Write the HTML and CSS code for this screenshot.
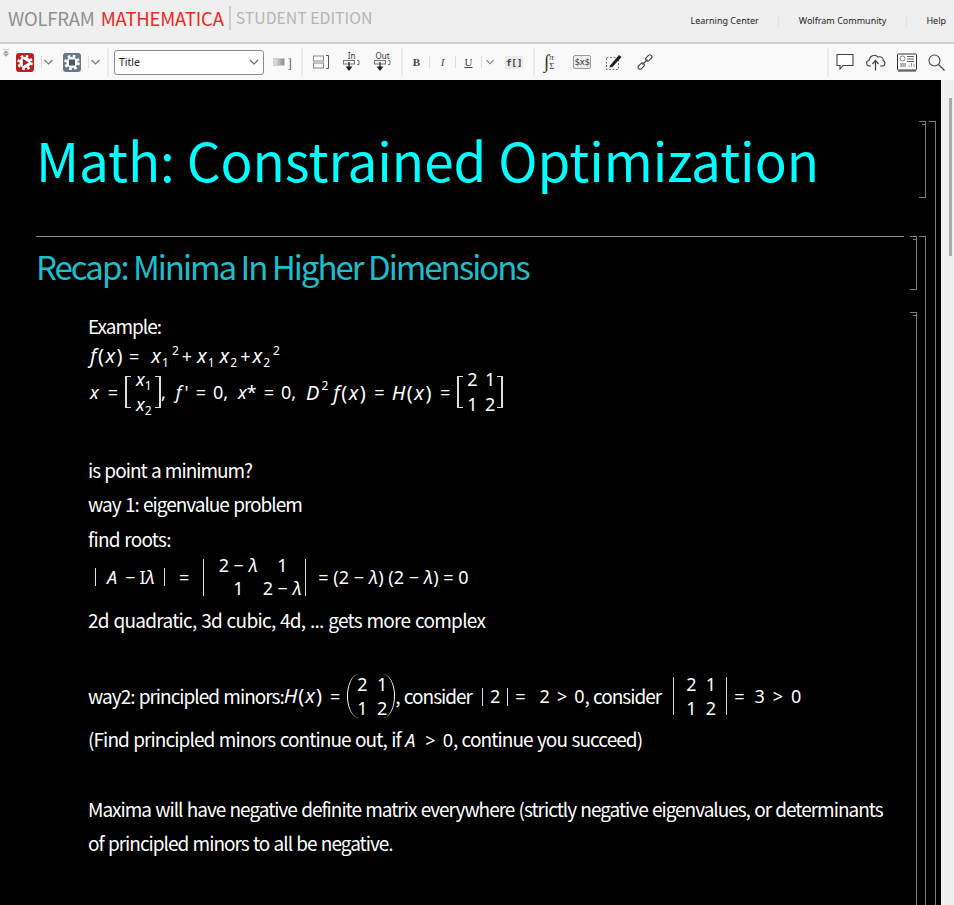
FILE: index.html
```html
<!DOCTYPE html>
<html lang="en">
<head>
<meta charset="utf-8">
<title>Wolfram Mathematica Student Edition</title>
<link rel="stylesheet" href="styles.css">
</head>
<body>
<header class="titlebar">
  <div class="logo"><span class="wolfram">WOLFRAM</span><span class="mathematica">MATHEMATICA</span><span class="edition">STUDENT EDITION</span></div>
  <nav class="links"><a>Learning Center</a><a>Wolfram Community</a><a>Help</a></nav>
</header>
<div class="toolbar">
  <svg class="collapse" width="8" height="8" viewBox="0 0 8 8"><path d="M1 .5h6M4 1.500 1.500 4h5zM4 7.500 1.500 5h5z" fill="#999" stroke="#aaa" stroke-width=".5"/></svg>
  <div class="tgroup first">
    <svg class="ic" width="18" height="19" viewBox="0 0 18 19"><rect width="18" height="19" rx="3" fill="#b5221d"/><circle cx="9" cy="9.500" r="6.300" fill="none" stroke="#fff" stroke-width="3" stroke-dasharray="2.500 2.450"/><circle cx="9" cy="9.500" r="5.600" fill="#fff"/><path d="M6.800 5.800l6 3.700-6 3.700z" fill="#b5221d"/></svg>
    <span class="vsep"></span><svg class="chev" width="9" height="6" viewBox="0 0 9 6"><path d="M.5 1l4 4 4-4" fill="none" stroke="#777" stroke-width="1.200"/></svg>
    <svg class="ic second" width="18" height="19" viewBox="0 0 18 19"><rect width="18" height="19" rx="3" fill="#66778c"/><circle cx="9" cy="9.500" r="6.300" fill="none" stroke="#fff" stroke-width="3" stroke-dasharray="2.500 2.450"/><circle cx="9" cy="9.500" r="5.600" fill="#fff"/><rect x="6" y="6.500" width="6" height="6" fill="#4c5a6b"/></svg>
    <span class="vsep"></span><svg class="chev" width="9" height="6" viewBox="0 0 9 6"><path d="M.5 1l4 4 4-4" fill="none" stroke="#777" stroke-width="1.200"/></svg>
  </div>
  <div class="tgroup style">
    <div class="select"><span>Title</span><svg width="10" height="6" viewBox="0 0 10 6"><path d="M1 1l4 4 4-4" fill="none" stroke="#666" stroke-width="1.200"/></svg></div>
    <span class="swatch"></span><span class="mini-b">]</span>
  </div>
  <div class="tgroup cells">
    <svg width="16" height="14" viewBox="0 0 16 14"><rect x=".5" y="1" width="10" height="5" fill="none" stroke="#888"/><rect x=".5" y="8" width="10" height="5" fill="none" stroke="#888"/><path d="M13 .500h2.500v13H13" fill="none" stroke="#555"/></svg>
    <span class="inout"><span class="iotext">In</span><svg width="17" height="12" viewBox="0 0 17 12"><rect x=".5" y=".5" width="11" height="3.500" fill="#f2f2f2" stroke="#777"/><path d="M14 .500h2v4h-2" fill="none" stroke="#777"/><path d="M6 2v6" stroke="#222" stroke-width="1.300"/><path d="M2.500 6.500h7L6 11z" fill="#222"/></svg></span>
    <span class="inout"><span class="iotext">Out</span><svg width="17" height="12" viewBox="0 0 17 12"><rect x=".5" y=".5" width="11" height="3.500" fill="#f2f2f2" stroke="#777"/><path d="M14 .500h2v4h-2" fill="none" stroke="#777"/><path d="M6 2v6" stroke="#222" stroke-width="1.300"/><path d="M2.500 6.500h7L6 11z" fill="#222"/></svg></span>
  </div>
  <div class="tgroup format">
    <b class="fb">B</b><span class="vsep light"></span><i class="fb">I</i><span class="vsep light"></span><u class="fb">U</u><span class="vsep light last"></span>
    <svg class="chev" width="8" height="6" viewBox="0 0 9 6"><path d="M.5 1l4 4 4-4" fill="none" stroke="#777" stroke-width="1.200"/></svg>
    <span class="fbox">f[]</span>
  </div>
  <div class="tgroup insert">
    <span class="intg"><span class="int">∫</span><span class="intr"><i>π</i><span>Σ</span></span></span>
    <span class="dollar">$x$</span>
    <svg width="16" height="16" viewBox="0 0 16 16"><rect x=".5" y="3.500" width="12" height="12" fill="none" stroke="#777" stroke-dasharray="2 1.500"/><path d="M4 11.500L13 1l2.500 2L6.500 13 3.500 13.500z" fill="#222"/></svg>
    <svg width="16" height="16" viewBox="0 0 16 16"><g fill="none" stroke="#444" stroke-width="1.100"><rect x="8.300" y="1.200" width="7" height="4" rx="2" transform="rotate(-45 11.800 3.200) translate(-.5 .5)"/><rect x=".7" y="10.800" width="7" height="4" rx="2" transform="rotate(-45 4.200 12.800) translate(.5 -.5)"/><path d="M5.500 10.500l5-5"/></g></svg>
  </div>
  <div class="tgroup right">
    <svg width="18" height="18" viewBox="0 0 18 18"><path d="M1 1.500h16v11H7l-3 3.500v-3.500H1z" fill="#fff" stroke="#444" stroke-width="1.100"/></svg>
    <svg width="21" height="18" viewBox="0 0 21 18"><path d="M6 13H4.500C1 13 .500 8 4 7.500 4.500 3 10 .500 13 4c3.500-1 6 1.500 5 3.500 3 1 2.500 5.500-1 5.500h-2" fill="none" stroke="#444" stroke-width="1.100"/><path d="M10.500 17.500V8M7.500 11l3-3.500 3 3.500" fill="none" stroke="#444" stroke-width="1.200"/></svg>
    <svg width="20" height="19" viewBox="0 0 20 19"><rect x=".5" y="1" width="19" height="16" rx="1" fill="#fff" stroke="#333"/><path d="M1 18h18" stroke="#333"/><circle cx="5.500" cy="5.500" r="2.500" fill="none" stroke="#888"/><path d="M10 3.500h7M10 6h7M10 8.500h7M3 11h6M3 13h6" stroke="#666"/><path d="M12 14v-2M14.500 14v-4M17 14v-3" stroke="#999"/></svg>
    <svg width="17" height="17" viewBox="0 0 17 17"><circle cx="6.500" cy="6.500" r="5.500" fill="none" stroke="#444" stroke-width="1.100"/><path d="M10.500 10.500l6 6" stroke="#444" stroke-width="1.300"/></svg>
  </div>
</div>
<div class="workspace">
  <main class="notebook">
    <h1 class="title">Math: Constrained Optimization</h1>
    <div class="rule"></div>
    <h2 class="section">Recap: Minima In Higher Dimensions</h2>
    <div class="body">
      <p class="l example">Example:</p>
      <p class="m fx"><span class="s2"></span><span class="fn"><i>f</i>(<i>x</i>)</span><span class="s5"></span>=<span class="s12"></span><i class="big">x</i><sub>1</sub><sup>2</sup><span class="s3"></span>+<span class="s5"></span><i class="big">x</i><sub>1</sub><span class="s5"></span><i class="big">x</i><sub>2</sub><span class="s3"></span>+<span class="s2"></span><i class="big">x</i><sub>2</sub><sup>2</sup></p>
      <div class="m eq1">
        <span class="s2"></span><i>x</i><span class="s9"></span>=<span class="s7"></span><span class="mat br col"><span><i>x</i><sub>1</sub></span><span><i>x</i><sub>2</sub></span></span>,<span class="s10"></span><i>f</i><span class="s3"></span>'<span class="s7"></span>=<span class="s7"></span>0,<span class="s10"></span><i>x</i>*<span class="s7"></span>=<span class="s7"></span>0,<span class="s10"></span><i class="big">D</i><sup class="low">2</sup><span class="s5"></span><span class="fn"><i>f</i>(<i>x</i>)</span><span class="s7"></span>=<span class="s7"></span><span class="fn"><i>H</i>(<i>x</i>)</span><span class="s7"></span>=<span class="s7"></span><span class="mat br two"><span><b>2</b><b>1</b></span><span><b>1</b><b>2</b></span></span>
      </div>
      <p class="l q1">is point a minimum?</p>
      <p class="l">way 1: eigenvalue problem</p>
      <p class="l roots">find roots:</p>
      <div class="m eq2">
        <span class="s7"></span><span class="bar"></span><span class="s11"></span><i>A</i><span class="s8"></span>−<span class="s4"></span>I<i>λ</i><span class="s9"></span><span class="bar"></span><span class="s14"></span>=<span class="s14"></span><span class="mat det wide"><b>2 − <i>λ</i></b><b>1</b><b>1</b><b>2 − <i>λ</i></b></span><span class="s12"></span><span class="loose">= (2 − <i>λ</i>) (2 − <i>λ</i>) = 0</span>
      </div>
      <p class="l after-eq">2d quadratic, 3d cubic, 4d, ... gets more complex</p>
      <div class="l w2">way2: principled minors:<span class="mt fn"><i>H</i>(<i>x</i>)</span><span class="mt"><span class="s7"></span>=<span class="s7"></span></span><span class="mat par two mt"><span><b>2</b><b>1</b></span><span><b>1</b><b>2</b></span></span>, consider<span class="s10"></span><span class="mt"><span class="bar short"></span><span class="s7"></span>2<span class="s7"></span><span class="bar short"></span><span class="s7"></span>=<span class="s14"></span>2<span class="s7"></span>&gt;<span class="s7"></span>0</span>, consider<span class="s12"></span><span class="mat det two mt"><span><b>2</b><b>1</b></span><span><b>1</b><b>2</b></span></span><span class="mt"><span class="s7"></span>=<span class="s10"></span>3<span class="s8"></span>&gt;<span class="s8"></span>0</span></div>
      <p class="l find">(Find principled minors continue out, if <i class="mt">A</i><span class="s10"></span><span class="mt">&gt;<span class="s7"></span>0</span>, continue you succeed)</p>
      <p class="l max">Maxima will have negative definite matrix everywhere (strictly negative eigenvalues, or determinants</p>
      <p class="l">of principled minors to all be negative.</p>
    </div>
    <span class="brk b-title"></span><span class="brk b-group1"></span><span class="brk b-sec"></span><span class="brk b-group2"></span><span class="brk b-text"></span>
  </main>
  <div class="scrollbar"><span class="thumb"></span></div>
</div>
</body>
</html>
```
FILE: styles.css
```css
* { box-sizing: border-box; }
html, body { margin: 0; height: 905px; overflow: hidden; }
body { width: 954px; background: #000; font-family: "Noto Sans CJK KR", "Liberation Sans", sans-serif; display: flex; flex-direction: column; }
p, h1, h2 { margin: 0; font-weight: 400; }

.titlebar { height: 44px; flex: none; background: #efefef; border-bottom: 2px solid #cfcfcf; display: flex; justify-content: space-between; padding-left: 8px; }
.logo { display: flex; align-items: center; height: 36px; font-size: 18.500px; letter-spacing: -.2px; }
.wolfram { color: #8f8f8f; }
.mathematica { color: #ea2a1c; margin-left: 6px; }
.edition { color: #b5b5b5; margin-left: 5px; padding-left: 5px; border-left: 2px solid #cfcfcf; font-size: 15.800px; line-height: 24px; letter-spacing: 0; }
.links { display: flex; align-items: center; height: 42px; font-family: "Noto Sans", sans-serif; font-size: 9px; color: #222; padding-right: 8px; }
.links a { padding: 0 19.500px; border-right: 1px solid #e2e2e2; line-height: 12px; }
.links a:last-child { border: 0; padding-right: 0; }

.toolbar { height: 36px; flex: none; background: #f9f9f9; display: flex; align-items: center; padding-left: 2px; }
.collapse { align-self: flex-start; margin-top: 5px; }
.tgroup { display: flex; align-items: center; height: 29px; border-right: 2px solid #ececec; }
.first { width: 99px; padding-left: 6px; }
.second { margin-left: 10px; }
.vsep { width: 1px; height: 12px; background: #ddd; margin: 0 2px 0 7px; }
.vsep.light { margin: 0 8px; }
.vsep.light.last { margin-right: 4px; }
.style { width: 194px; padding-left: 5px; }
.select { width: 150px; height: 25px; border: 1px solid #8c8c8c; border-radius: 3px; background: #fff; display: flex; align-items: center; justify-content: space-between; padding: 0 4px; font-family: "Noto Sans", sans-serif; font-size: 10.500px; color: #222; }
.swatch { width: 12px; height: 8px; margin-left: 9px; background: linear-gradient(90deg, #e4e4e4, #8c8c8c); border: 1px solid #ccc; }
.mini-b { font-size: 12px; margin-left: 3px; color: #444; }
.cells { width: 100px; padding-left: 10px; gap: 14px; }
.inout { display: flex; flex-direction: column; align-items: center; width: 17px; }
.iotext { font-family: "Noto Sans", sans-serif; font-size: 8px; line-height: 8px; color: #333; }
.format { width: 132px; padding-left: 9px; }
.fb { font-family: "Liberation Serif", serif; font-size: 11px; color: #444; width: 9px; text-align: center; }
.fbox { font-family: "DejaVu Sans Mono", monospace; font-size: 9.500px; font-weight: 700; color: #444; background: #e9e9e9; margin-left: 11px; padding: 1px; letter-spacing: -.4px; }
.insert { width: 294px; padding-left: 9px; gap: 15px; }
.intg { display: flex; align-items: center; font-family: "Liberation Serif", serif; color: #333; width: 14px; }
.int { font-size: 19px; }
.intr { display: flex; flex-direction: column; font-size: 9px; line-height: 9px; }
.dollar { border: 1px solid #999; background: #efefef; border-radius: 2px; font-family: "DejaVu Sans Mono", monospace; font-size: 9px; line-height: 12px; width: 18px; text-align: center; letter-spacing: -.5px; color: #333; }
.right { border: 0; padding-left: 7px; gap: 11px; }

.workspace { flex: 1; display: flex; min-height: 0; }
.notebook { width: 941px; background: #000; color: #fff; position: relative; overflow: hidden; }
.scrollbar { flex: 1; background: #f0f0f0; position: relative; }
.thumb { position: absolute; left: 8px; top: 18px; width: 3px; height: 158px; background: #a8a8a8; }

.title { margin: 42px 0 0 36px; font-size: 53px; line-height: 74px; color: #0ff; letter-spacing: -.03px; white-space: nowrap; }
.rule { height: 1px; margin: 40px 37px 0 36px; background: #888; }
.section { margin: 8px 0 0 36px; font-size: 33px; line-height: 42px; color: #1fbcca; letter-spacing: -2px; white-space: nowrap; }
.body { margin: 26px 0 0 88px; font-size: 19px; letter-spacing: -1px; word-spacing: 1px; }
.l { height: 34px; line-height: 34px; white-space: nowrap; }
.example { height: 26px; line-height: 26px; }
.m { font-family: "Noto Sans", sans-serif; font-size: 18px; letter-spacing: 0; word-spacing: 0; white-space: nowrap; }
.m sub, .mat sub { font-size: 12px; vertical-align: -4px; line-height: 0; }
.m sup { font-size: 12px; vertical-align: 8px; line-height: 0; margin-left: 3px; }
.m sup.low { position: relative; top: -6px; margin-left: 1px; }
.big { font-size: 20px; letter-spacing: 1px; }
.fn { font-size: 20px; letter-spacing: 1.500px; }
.fx { height: 34px; line-height: 34px; }
.eq1 { height: 38px; display: flex; align-items: center; }
.mat { display: inline-flex; flex-direction: column; justify-content: center; height: 32px; width: 36px; padding: 0 5px; font-family: "Noto Sans", sans-serif; font-size: 18px; line-height: 25px; position: relative; letter-spacing: 0; word-spacing: 0; flex: none; }
.mat > span { display: flex; justify-content: space-between; flex: none; }
.mat.col > span { display: block; padding-left: 4px; }
.two { width: 46px; }
.two > span { padding: 0 1px 0 3px; }
.mat b { font-weight: 400; }
.br { border-left: 2px solid #ddd; border-right: 2px solid #ddd; }
.br::before, .br::after { content: ""; position: absolute; left: 0; right: 0; height: 1px; border-left: 4px solid #ddd; border-right: 4px solid #ddd; }
.br::before { top: 0; }
.br::after { bottom: 0; }
.det { border-left: 1px solid #ddd; border-right: 1px solid #ddd; }
.mat.wide { display: inline-grid; grid-template-columns: 36px 36px; column-gap: 8px; justify-items: center; align-content: center; width: 103px; height: 37px; padding: 0 0 0 11px; line-height: 23px; }
.loose { letter-spacing: 0; }
.roots { margin-top: 1px; letter-spacing: -.75px; }
.q1 { margin-top: 42px; }
.eq2 { height: 42px; display: flex; align-items: center; }
.after-eq { margin-top: 5px; letter-spacing: -.72px; }
.bar { display: inline-block; width: 1px; height: 18px; background: #ddd; vertical-align: -3px; }
.w2 { margin-top: 37px; height: 44px; line-height: 44px; display: flex; align-items: center; }
.w2 .mat.two { height: 44px; width: 48px; line-height: 24px; }
.w2 .det.two { height: 38px; width: 54px; padding: 0 9px; }
.mt { font-family: "Noto Sans", sans-serif; font-size: 18px; letter-spacing: 0; word-spacing: 0; }
.mt.fn { font-size: 20px; letter-spacing: 1px; }
.par { border-left: 1px solid #fff; border-right: 1px solid #fff; border-radius: 12px / 22px; padding: 0 6px; }
.find { margin-top: 4px; letter-spacing: -.92px; }
.max { margin-top: 36px; letter-spacing: -1.010px; }

.s2 { display: inline-block; width: 2px; }
.s3 { display: inline-block; width: 3px; }
.s4 { display: inline-block; width: 4px; }
.s5 { display: inline-block; width: 5px; }
.s7 { display: inline-block; width: 7px; }
.s8 { display: inline-block; width: 8px; }
.s9 { display: inline-block; width: 9px; }
.s10 { display: inline-block; width: 10px; }
.s11 { display: inline-block; width: 11px; }
.s12 { display: inline-block; width: 12px; }
.s14 { display: inline-block; width: 14px; }

.brk { position: absolute; border: solid #7d7d7d; border-width: 1px 1px 1px 0; width: 7px; }
.brk::before { content: ""; position: absolute; right: 0; top: 2px; width: 3px; height: 1px; background: #7d7d7d; }
.b-title { left: 919px; top: 41px; height: 77px; }
.b-group1 { left: 929px; top: 41px; bottom: -2px; }
.b-sec { left: 910px; top: 156px; height: 54px; }
.b-group2 { left: 919px; top: 156px; bottom: -2px; }
.b-text { left: 910px; top: 232px; bottom: -2px; }
.b-group1::before, .b-group2::before { display: none; }
```
